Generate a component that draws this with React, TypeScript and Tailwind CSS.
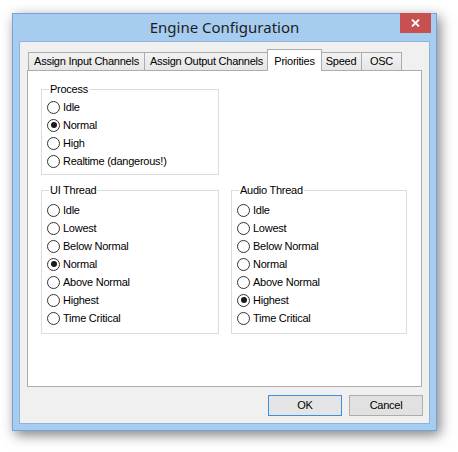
import type { ReactNode } from "react";

type Option = { label: string; checked?: boolean };

const processOptions: Option[] = [
  { label: "Idle" },
  { label: "Normal", checked: true },
  { label: "High" },
  { label: "Realtime (dangerous!)" },
];

const uiOptions: Option[] = [
  { label: "Idle" },
  { label: "Lowest" },
  { label: "Below Normal" },
  { label: "Normal", checked: true },
  { label: "Above Normal" },
  { label: "Highest" },
  { label: "Time Critical" },
];

const audioOptions: Option[] = [
  { label: "Idle" },
  { label: "Lowest" },
  { label: "Below Normal" },
  { label: "Normal" },
  { label: "Above Normal" },
  { label: "Highest", checked: true },
  { label: "Time Critical" },
];

const tabs = [
  { label: "Assign Input Channels", width: "w-[117px]" },
  { label: "Assign Output Channels", width: "w-[125px]" },
  { label: "Priorities", width: "w-[55px]", active: true },
  { label: "Speed", width: "w-[42px]" },
  { label: "OSC", width: "w-[41px]" },
];

function Radio({ label, checked }: Option) {
  return (
    <div className="flex h-[18px] items-center gap-[3px]">
      <span className="flex h-[13px] w-[13px] items-center justify-center rounded-full border border-[#333333] bg-white">
        {checked ? <span className="h-[6px] w-[6px] rounded-full bg-[#1a1a1a]" /> : null}
      </span>
      <span>{label}</span>
    </div>
  );
}

function Group({
  title,
  className,
  children,
}: {
  title: string;
  className: string;
  children: ReactNode;
}) {
  return (
    <fieldset className={`border border-[#dcdcdc] pl-[5px] ${className}`}>
      <legend className="ml-[2px] px-[1px] leading-[13px]">{title}</legend>
      {children}
    </fieldset>
  );
}

export default function App() {
  return (
    <div
      className="h-[452px] w-[458px] bg-white pl-[12px] pt-[13px] text-[11px] tracking-[-0.25px] text-black"
      style={{ fontFamily: '"Liberation Sans", Arial, sans-serif' }}
    >
      <div className="flex h-[418px] w-[425px] flex-col border border-[#75a3d3] bg-[#a6ccef] shadow-[3px_4px_12px_rgba(0,0,0,0.5)]">
        {/* title bar */}
        <div className="-mt-px flex h-[28px] items-start">
          <div className="w-[36px]" />
          <div
            className="flex-1 pt-px text-center text-[15px] leading-[27px] tracking-normal text-[#1e1e1e]"
            style={{ fontFamily: '"Segoe UI", "Noto Sans", sans-serif' }}
          >
            Engine Configuration
          </div>
          <div className="mr-[5px] flex h-[20px] w-[31px] items-center justify-center bg-[#c75050]">
            <svg width="9" height="8" viewBox="0 0 9 8">
              <path d="M1 0.5 L8 7.5 M8 0.5 L1 7.5" stroke="white" strokeWidth="1.8" />
            </svg>
          </div>
        </div>

        {/* client area */}
        <div className="mx-[6px] mb-[6px] flex flex-1 flex-col border border-[#8db3d9] bg-[#f0f0f0] px-[7px] pt-[7px]">
          <div className="flex h-[21px] items-end pl-[1px]">
            {tabs.map((tab, i) =>
              tab.active ? (
                <div
                  key={tab.label}
                  className={`relative z-10 -mb-px -ml-[2px] -mr-[1px] flex h-[22px] items-start justify-center border border-b-0 border-[#acacac] bg-white pt-[3px] ${tab.width}`}
                >
                  {tab.label}
                </div>
              ) : (
                <div
                  key={tab.label}
                  className={`flex h-[18px] items-center justify-center border border-b-0 border-[#acacac] bg-gradient-to-b from-[#f2f2f2] to-[#e6e6e6] ${tab.width} ${i === 0 ? "" : "-ml-px"}`}
                >
                  {tab.label}
                </div>
              ),
            )}
          </div>

          <div className="h-[317px] w-[395px] border border-[#acacac] bg-white px-[13px] pt-[12px]">
            <Group title="Process" className="w-[178px] pb-[4px] pt-[2px]">
              {processOptions.map((o) => (
                <Radio key={o.label} {...o} />
              ))}
            </Group>

            <div className="mt-[9px] flex gap-[12px]">
              <Group title="UI Thread" className="w-[178px] pb-[6px] pt-[4px]">
                {uiOptions.map((o) => (
                  <Radio key={o.label} {...o} />
                ))}
              </Group>
              <Group title="Audio Thread" className="w-[176px] pb-[6px] pt-[4px]">
                {audioOptions.map((o) => (
                  <Radio key={o.label} {...o} />
                ))}
              </Group>
            </div>
          </div>

          <div className="mr-[-1px] mt-[8px] flex justify-end gap-[7px]">
            <button className="h-[21px] w-[74px] border border-[#3c8fe0] bg-[#e5e5e5]">OK</button>
            <button className="h-[21px] w-[74px] border border-[#adadad] bg-[#e1e1e1]">Cancel</button>
          </div>
        </div>
      </div>
    </div>
  );
}
